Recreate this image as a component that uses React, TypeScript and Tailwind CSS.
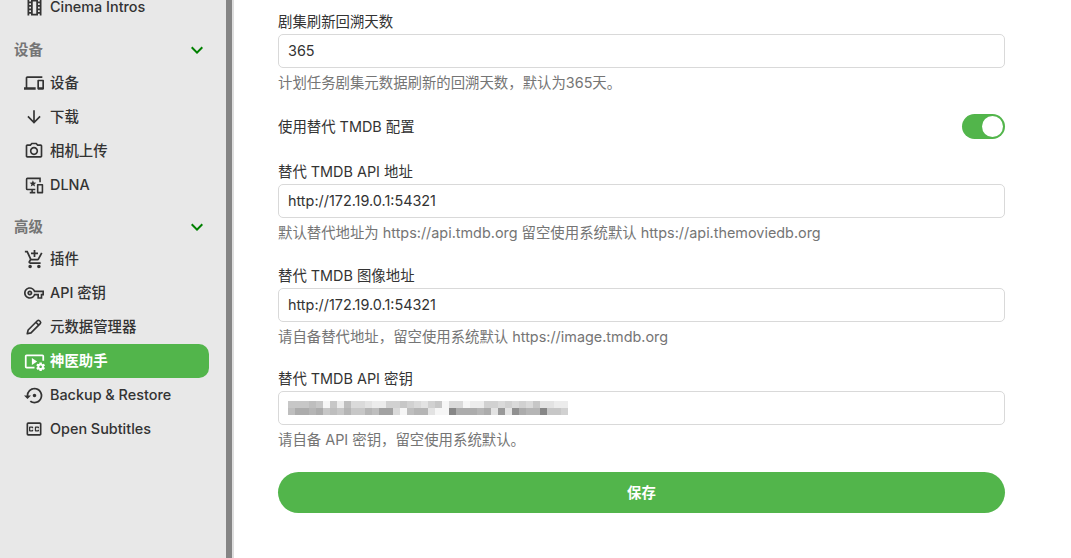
import {
  MdOutlineLocalMovies,
  MdExpandMore,
  MdOutlineDevices,
  MdArrowDownward,
  MdOutlinePhotoCamera,
  MdOutlineAddShoppingCart,
  MdOutlineVpnKey,
  MdOutlineVideoSettings,
  MdOutlineSettingsBackupRestore,
  MdOutlineClosedCaption,
} from 'react-icons/md';

const font = "font-['Inter','Noto_Sans_CJK_SC',sans-serif]";

function DlnaIcon({ size = 20 }: { size?: number }) {
  return (
    <svg width={size} height={size} viewBox="0 0 24 24" fill="currentColor">
      <path d="M3 2h17v6h-2V4H3v12h10v2h-3v2h3v2H6v-2h2v-2H3a2 2 0 0 1-2-2V4a2 2 0 0 1 2-2z" />
      <path d="M10 5.5l1.2 2.8 3 .2-2.3 1.9.8 3-2.7-1.6-2.7 1.6.8-3-2.3-1.9 3-.2z" />
      <path d="M16 10h6a1 1 0 0 1 1 1v10a1 1 0 0 1-1 1h-6a1 1 0 0 1-1-1V11a1 1 0 0 1 1-1zm1 2v8h4v-8z" />
    </svg>
  );
}

function PenIcon({ size = 20 }: { size?: number }) {
  return (
    <svg width={size} height={size} viewBox="0 0 24 24" fill="none" stroke="currentColor" strokeWidth="2.2" strokeLinejoin="round">
      <path d="M3 21l1.2-5L16.5 3.7a2 2 0 0 1 2.8 0l1 1a2 2 0 0 1 0 2.8L8 19.8z" />
      <path d="M14.5 5.7l3.8 3.8" />
    </svg>
  );
}

function NavItem({
  icon,
  label,
  active,
}: {
  icon: React.ReactNode;
  label: string;
  active?: boolean;
}) {
  return (
    <div
      className={`flex h-[34px] items-center rounded-[10px] pl-[12px] text-[14.4px] ${
        active ? 'bg-[#52b54b] font-semibold text-white' : 'font-medium text-[#333333]'
      }`}
    >
      <span className="flex w-[22px] shrink-0 justify-center">{icon}</span>
      <span className="ml-[5px] whitespace-nowrap">{label}</span>
    </div>
  );
}

function Section({ title }: { title: string }) {
  return (
    <div className="flex h-[24px] items-center justify-between pl-[3px] text-[14.4px] font-semibold text-[#757575]">
      <span>{title}</span>
      <MdExpandMore size={24} className="text-[#008000]" />
    </div>
  );
}

function Field({
  label,
  value,
  hint,
  children,
}: {
  label: string;
  value?: string;
  hint: string;
  children?: React.ReactNode;
}) {
  return (
    <div>
      <div className="h-[24px] text-[14.4px] leading-[24px] text-[#333333]">{label}</div>
      <div className="flex h-[34px] items-center rounded-[5px] border border-[#d9d9d9] bg-white px-[9px] text-[14.4px] text-[#333333]">
        {value ?? children}
      </div>
      <div className="mt-[5px] h-[20px] text-[14.4px] leading-[20px] text-[#757575]">{hint}</div>
    </div>
  );
}

// mosaic that hides the key: [top row, bottom row], darkness per 7px cell
const mosaicTop = [
  0.3, 0.3, 0.3, 0.35, 0.3, 0.05, 0.3, 0.1, 0.35, 0.2, 0.2, 0.15, 0.1, 0.1, 0.25, 0.25, 0.3, 0.25, 0.2, 0.15, 0.25,
  0.3, 0.05, 0.2, 0.2, 0.05, 0.1, 0.1, 0.25, 0.25, 0.2, 0.25, 0.2, 0.25, 0.2, 0.3, 0.15, 0.15, 0.1, 0.1,
];
const mosaicBottom = [
  0.35, 0.45, 0.45, 0.4, 0.45, 0.3, 0.35, 0.3, 0.4, 0.3, 0.3, 0.4, 0.35, 0.5, 0.5, 0.2, 0.05, 0.35, 0.4, 0.4, 0.15,
  0.05, 0.05, 0.65, 0.45, 0.45, 0.45, 0.4, 0.45, 0.15, 0.55, 0.15, 0.6, 0.45, 0.4, 0.4, 0.65, 0.3, 0.3, 0.25,
];

function Mosaic() {
  return (
    <div className="flex flex-col blur-[0.6px]">
      {[mosaicTop, mosaicBottom].map((row, r) => (
        <div key={r} className="flex h-[7px]">
          {row.map((d, i) => (
            <div
              key={i}
              className="h-full w-[7px]"
              style={{ backgroundColor: `rgba(70,70,70,${d})` }}
            />
          ))}
        </div>
      ))}
    </div>
  );
}

export default function App() {
  return (
    <div className={`flex h-[558px] w-[1071px] overflow-hidden bg-white ${font}`}>
      {/* Sidebar */}
      <aside className="h-full w-[226px] shrink-0 overflow-hidden bg-[#e8e8e8] pl-[11px] pr-[17px]">
        <div className="-mt-[10px]">
          <NavItem icon={<MdOutlineLocalMovies size={21} />} label="Cinema Intros" />
          <div className="mt-[14px]">
            <Section title="设备" />
          </div>
          <div className="mt-[4px]">
            <NavItem icon={<MdOutlineDevices size={20} />} label="设备" />
            <NavItem icon={<MdArrowDownward size={20} />} label="下载" />
            <NavItem icon={<MdOutlinePhotoCamera size={20} />} label="相机上传" />
            <NavItem icon={<DlnaIcon size={19} />} label="DLNA" />
          </div>
          <div className="mt-[13px]">
            <Section title="高级" />
          </div>
          <div className="mt-[3px]">
            <NavItem icon={<MdOutlineAddShoppingCart size={21} />} label="插件" />
            <NavItem icon={<MdOutlineVpnKey size={20} />} label="API 密钥" />
            <NavItem icon={<PenIcon size={18} />} label="元数据管理器" />
            <NavItem icon={<MdOutlineVideoSettings size={21} />} label="神医助手" active />
            <NavItem icon={<MdOutlineSettingsBackupRestore size={21} />} label="Backup & Restore" />
            <NavItem icon={<MdOutlineClosedCaption size={20} />} label="Open Subtitles" />
          </div>
        </div>
      </aside>

      {/* Scrollbar */}
      <div className="h-full w-[6px] shrink-0 bg-[#858585]" />
      <div className="h-full w-[2px] shrink-0 bg-[#dedede]" />

      {/* Main */}
      <main className="ml-[44px] h-full w-[727px] shrink-0 pt-[10px]">
        <Field label="剧集刷新回溯天数" value="365" hint="计划任务剧集元数据刷新的回溯天数，默认为365天。" />

        <div className="mt-[21px] flex h-[25px] items-center justify-between text-[14.4px] text-[#333333]">
          <span>使用替代 TMDB 配置</span>
          <div className="flex h-[25px] w-[43px] items-center justify-end rounded-full bg-[#52b54b] pr-[2px]">
            <div className="h-[21px] w-[21px] rounded-full bg-white" />
          </div>
        </div>

        <div className="mt-[21px]">
          <Field
            label="替代 TMDB API 地址"
            value="http://172.19.0.1:54321"
            hint="默认替代地址为 https://api.tmdb.org 留空使用系统默认 https://api.themoviedb.org"
          />
        </div>

        <div className="mt-[21px]">
          <Field
            label="替代 TMDB 图像地址"
            value="http://172.19.0.1:54321"
            hint="请自备替代地址，留空使用系统默认 https://image.tmdb.org"
          />
        </div>

        <div className="mt-[20px]">
          <Field label="替代 TMDB API 密钥" hint="请自备 API 密钥，留空使用系统默认。">
            <Mosaic />
          </Field>
        </div>

        <button className="mt-[22px] flex h-[41px] w-full items-center justify-center rounded-full bg-[#52b54b] text-[14.4px] font-bold text-white">
          保存
        </button>
      </main>
    </div>
  );
}
